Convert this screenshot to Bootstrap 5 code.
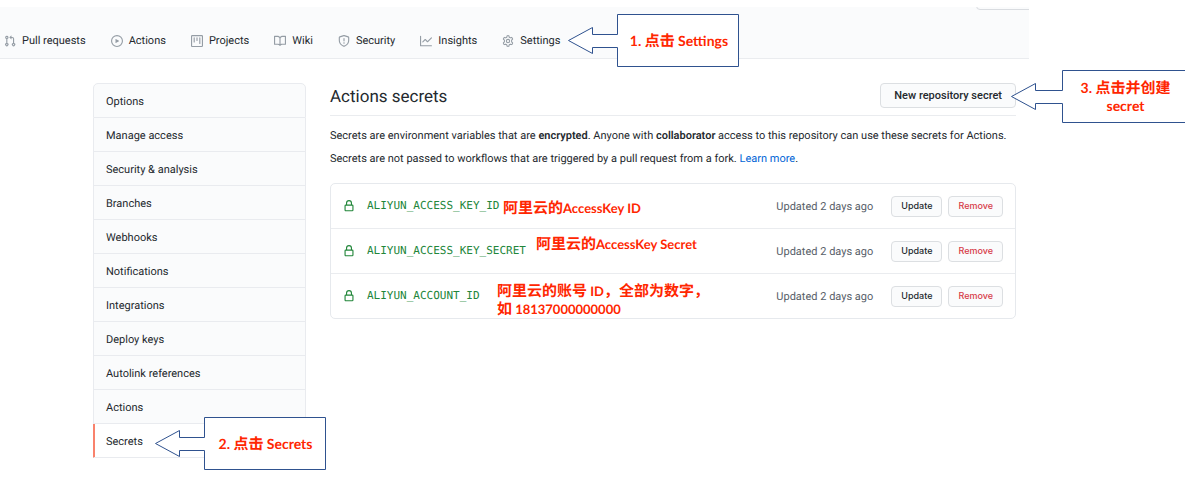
<!DOCTYPE html>
<html lang="zh-CN">
<head>
<meta charset="utf-8">
<meta name="viewport" content="width=device-width, initial-scale=1">
<title>Actions secrets</title>
<link href="https://cdn.jsdelivr.net/npm/bootstrap@5.3.0/dist/css/bootstrap.min.css" rel="stylesheet">
<style>
  body { font-family: Roboto, "Noto Sans CJK SC", sans-serif; font-size: 11px; line-height: 16px; color: #24292e; background: #fff; text-rendering: geometricPrecision; }
  svg { flex: none; }
  .page { overflow: hidden; padding-bottom: 20px; }
  .repo-head { max-width: 1029px; height: 52px; margin-top: 7px; background: #fafbfc; border-bottom: 1px solid #eaecef; overflow: hidden; }
  .repo-nav { padding: 26px 4px 0; gap: 25px; }
  .repo-nav .nav-link { padding: 0; gap: 6px; color: #24292e; white-space: nowrap; }
  .repo-nav svg { fill: #959da5; }
  .cut-button { top: -20px; right: -20px; width: 73px; height: 23px; border: 1px solid #d9dce0; border-radius: 4px; background: #fafbfc; }
  .settings { max-width: 923px; margin: 24px 0 0 93px; gap: 24px; }
  .side-menu { width: 213px; flex: none; --bs-list-group-border-color: #e9ebef; --bs-list-group-bg: #fafbfc; --bs-list-group-color: #24292e; --bs-list-group-border-radius: 5px; }
  .side-menu .list-group-item { height: 34px; padding: 10px 12px 0; }
  .side-menu .list-group-item:first-child { height: 35px; }
  .side-menu .current { background: #fff; box-shadow: inset 1px 0 #f9826c; border-left-color: #f9826c; border-radius: 0; }
  .title-bar { height: 33px; border-bottom: 1px solid #eaecef; }
  .title-bar h1 { font-size: 17px; line-height: 28px; font-weight: 400; margin: 0; }
  .btn-soft { --bs-btn-font-family: Inter, sans-serif; --bs-btn-font-size: 9px; --bs-btn-line-height: 12px; --bs-btn-font-weight: 500; --bs-btn-padding-x: 9px; --bs-btn-padding-y: 3px; --bs-btn-bg: #fafbfc; --bs-btn-border-color: #dcdfe2; --bs-btn-border-radius: 4px; --bs-btn-color: #24292e; height: 21px; white-space: nowrap; }
  .btn-new { --bs-btn-font-family: Roboto, sans-serif; --bs-btn-font-size: 11px; --bs-btn-padding-x: 13px; height: 25px; line-height: 17px; }
  .btn-remove { --bs-btn-color: #d73a49; margin-left: 6px; }
  .intro { margin: 0 0 7px; }
  .intro a { color: #0366d6; text-decoration: none; }
  .intro b { font-weight: 600; }
  .secret-list { border: 1px solid #e6e9ed; border-radius: 5px; margin: 16px 0 0; padding: 0; list-style: none; }
  .secret-list li { height: 44px; padding: 0 12px; }
  .secret-list li + li { border-top: 1px solid #eaecef; height: 45px; }
  .secret-list code { font-family: "DejaVu Sans Mono", monospace; font-size: 11px; color: #22863a; margin-left: 12px; }
  .secret-list .when { color: #586069; margin-right: 18px; padding-top: 2px; }
  .note { font-family: Lato, "Noto Sans CJK SC", sans-serif; font-size: 14px; line-height: 18px; font-weight: 700; color: #ff2600; white-space: nowrap; }
  .note i { font-style: normal; font-size: 15px; line-height: 1; }
  .secret-list .note { font-size: 13px; }
  .note-id { left: 172px; top: 15px; }
  .note-key { left: 205px; top: 6px; }
  .note-account { left: 166px; top: 8px; }
  .callout { width: 172px; height: 54px; padding-left: 49px; z-index: 2; }
  .callout svg { left: 0; top: 0; }
  .at-settings { left: 100%; top: -19px; margin-left: 8px; }
  .at-secrets { left: 61px; top: -7px; }
  .at-new { left: 100%; top: -13px; margin-left: -5px; width: 180px; }
</style>
</head>
<body>
<svg class="d-none" aria-hidden="true">
  <symbol id="lock" viewBox="0 0 16 16"><path fill-rule="evenodd" d="M4 4v2h-.25A1.75 1.75 0 002 7.75v5.5c0 .966.784 1.75 1.75 1.75h8.5A1.75 1.75 0 0014 13.250v-5.500A1.75 1.75 0 0012.250 6H12V4a4 4 0 10-8 0zm6.500 2V4a2.500 2.500 0 10-5 0v2h5zM3.500 7.750a.25.25 0 01.25-.25h8.500a.25.25 0 01.25.25v5.500a.25.25 0 01-.25.25h-8.500a.25.25 0 01-.25-.25v-5.500z"/></symbol>
  <symbol id="arrow-box" viewBox="0 0 172 54"><path d="M.5 26.500L24.500 13.500V20.500H49.500V.5H170.500V52.500H49.500V33.500H24.500V39.500Z" fill="#fff" stroke="#2f528f"/></symbol>
</svg>

<div class="page">
<header class="position-relative">
  <div class="repo-head position-relative">
    <span class="cut-button position-absolute"></span>
  </div>
  <nav class="position-absolute top-0 start-0" aria-label="Repository">
    <div class="repo-nav nav flex-nowrap">
      <a class="nav-link d-flex align-items-center" href="#"><svg width="12" height="12" viewBox="0 0 16 16"><path fill-rule="evenodd" d="M7.177 3.073L9.573.677A.25.25 0 0110 .854v4.792a.25.25 0 01-.427.177L7.177 3.427a.25.25 0 010-.354zM3.750 2.500a.75.75 0 100 1.500.75.75 0 000-1.500zm-2.250.75a2.250 2.250 0 113 2.122v5.256a2.251 2.251 0 11-1.500 0V5.372A2.250 2.250 0 011.500 3.250zM11 2.500h-1V4h1a1 1 0 011 1v5.628a2.251 2.251 0 101.500 0V5A2.500 2.500 0 0011 2.500zm1 10.250a.75.75 0 111.500 0 .75.75 0 01-1.500 0zM3.750 12a.75.75 0 100 1.500.75.75 0 000-1.500z"/></svg>Pull requests</a>
      <a class="nav-link d-flex align-items-center" href="#"><svg width="12" height="12" viewBox="0 0 16 16"><path fill-rule="evenodd" d="M1.500 8a6.500 6.500 0 1113 0 6.500 6.500 0 01-13 0zM8 0a8 8 0 100 16A8 8 0 008 0zM6.379 5.227A.25.25 0 006 5.442v5.117a.25.25 0 00.379.214l4.264-2.559a.25.25 0 000-.428L6.379 5.227z"/></svg>Actions</a>
      <a class="nav-link d-flex align-items-center" href="#"><svg width="12" height="12" viewBox="0 0 16 16"><path fill-rule="evenodd" d="M1.750 0A1.750 1.750 0 000 1.750v12.500C0 15.216.784 16 1.750 16h12.500A1.750 1.750 0 0016 14.250V1.750A1.750 1.750 0 0014.250 0H1.750zM1.500 1.750a.25.25 0 01.25-.25h12.500a.25.25 0 01.25.25v12.500a.25.25 0 01-.25.25H1.750a.25.25 0 01-.25-.25V1.750zM11.750 3a.75.75 0 00-.75.75v7.500a.75.75 0 001.500 0v-7.500a.75.75 0 00-.75-.75zm-8.250.75a.75.75 0 011.500 0v5.500a.75.75 0 01-1.500 0v-5.500zM8 3a.75.75 0 00-.75.75v3.500a.75.75 0 001.500 0v-3.500A.75.75 0 008 3z"/></svg>Projects</a>
      <a class="nav-link d-flex align-items-center" href="#"><svg width="12" height="12" viewBox="0 0 16 16"><path fill-rule="evenodd" d="M0 1.750A.75.75 0 01.75 1h4.253c1.227 0 2.317.59 3 1.501A3.744 3.744 0 0111.006 1h4.245a.75.75 0 01.75.75v10.500a.75.75 0 01-.75.75h-4.507a2.250 2.250 0 00-1.591.659l-.622.621a.75.75 0 01-1.060 0l-.622-.621A2.250 2.250 0 005.258 13H.75a.75.75 0 01-.75-.75V1.750zm8.755 3a2.250 2.250 0 012.250-2.250H14.500v9h-3.757c-.71 0-1.400.201-1.992.572l.004-7.322zm-1.504 7.324l.004-5.073-.002-2.253A2.250 2.250 0 005.003 2.500H1.500v9h3.757a3.750 3.750 0 011.994.574z"/></svg>Wiki</a>
      <a class="nav-link d-flex align-items-center" href="#"><svg width="12" height="12" viewBox="0 0 16 16"><path fill-rule="evenodd" d="M7.467.133a1.750 1.750 0 011.066 0l5.250 1.680A1.750 1.750 0 0115 3.480V7c0 1.566-.32 3.182-1.303 4.682-.983 1.498-2.585 2.813-5.032 3.855a1.700 1.700 0 01-1.330 0c-2.447-1.042-4.049-2.357-5.032-3.855C1.320 10.182 1 8.566 1 7V3.480a1.750 1.750 0 011.217-1.667l5.250-1.680zm.61 1.429a.25.25 0 00-.153 0l-5.250 1.680a.25.25 0 00-.174.238V7c0 1.358.275 2.666 1.057 3.860.784 1.194 2.121 2.340 4.366 3.297a.2.2 0 00.154 0c2.245-.956 3.582-2.104 4.366-3.298C13.225 9.666 13.500 8.360 13.500 7V3.480a.25.25 0 00-.174-.237l-5.250-1.680zM9 10.500a1 1 0 11-2 0 1 1 0 012 0zM8.750 4.750a.75.75 0 00-1.500 0v3a.75.75 0 001.500 0v-3z"/></svg>Security</a>
      <a class="nav-link d-flex align-items-center" href="#"><svg width="12" height="12" viewBox="0 0 16 16"><path fill-rule="evenodd" d="M1.500 1.750a.75.75 0 00-1.500 0v12.500c0 .414.336.75.75.75h14.500a.75.75 0 000-1.500H1.500V1.750zm14.280 2.530a.75.75 0 00-1.060-1.060L10 7.940 7.530 5.470a.75.75 0 00-1.060 0L3.220 8.720a.75.75 0 001.060 1.060L7 7.060l2.470 2.470a.75.75 0 001.060 0l5.250-5.250z"/></svg>Insights</a>
      <a class="nav-link d-flex align-items-center position-relative" href="#"><svg width="12" height="12" viewBox="0 0 16 16"><path d="M6.700 1.200Q8 .5 9.300 1.200L9.700 3.100 11 3.800 12.900 3.200Q14.100 4 14.200 5.400L12.800 6.800V9.200L14.200 10.600Q14.100 12 12.900 12.800L11 12.200 9.700 12.900 9.300 14.800Q8 15.500 6.700 14.800L6.300 12.900 5 12.200 3.100 12.800Q1.900 12 1.800 10.600L3.200 9.200V6.800L1.800 5.400Q1.900 4 3.100 3.200L5 3.800 6.300 3.100Z" fill="none" stroke="#959da5" stroke-width="1.400" stroke-linejoin="round"/><circle cx="8" cy="8" r="2.200" fill="none" stroke="#959da5" stroke-width="1.400"/></svg>Settings
        <span class="callout note position-absolute at-settings d-flex align-items-center justify-content-center"><svg class="position-absolute" width="172" height="54"><use href="#arrow-box"/></svg><span class="position-relative">1. <i>点击</i> Settings</span></span></a>
    </div>
  </nav>
</header>

<div class="settings d-flex">
  <nav class="side-menu list-group" aria-label="Settings">
    <a class="list-group-item" href="#">Options</a>
    <a class="list-group-item" href="#">Manage access</a>
    <a class="list-group-item" href="#">Security &amp; analysis</a>
    <a class="list-group-item" href="#">Branches</a>
    <a class="list-group-item" href="#">Webhooks</a>
    <a class="list-group-item" href="#">Notifications</a>
    <a class="list-group-item" href="#">Integrations</a>
    <a class="list-group-item" href="#">Deploy keys</a>
    <a class="list-group-item" href="#">Autolink references</a>
    <a class="list-group-item" href="#">Actions</a>
    <a class="list-group-item current" href="#" aria-current="page">Secrets
      <span class="callout note position-absolute at-secrets d-flex align-items-center justify-content-center"><svg class="position-absolute" width="172" height="54"><use href="#arrow-box"/></svg><span class="position-relative">2. <i>点击</i> Secrets</span></span></a>
  </nav>

  <main class="flex-grow-1">
    <div class="title-bar d-flex justify-content-between align-items-start mb-2">
      <h1>Actions secrets</h1>
      <div class="position-relative">
        <button type="button" class="btn btn-soft btn-new">New repository secret</button>
        <div class="callout note position-absolute at-new d-flex align-items-center justify-content-center text-center"><svg class="position-absolute" width="180" height="54" viewBox="0 0 180 54"><path d="M.5 26.500L24.500 13.500V20.500H51.500V.5H178.500V52.500H51.500V33.500H24.500V39.500Z" fill="#fff" stroke="#2f528f"/></svg><span class="position-relative">3. <i>点击并创建</i><br>secret</span></div>
      </div>
    </div>
    <div class="pt-1 mt-1">
      <p class="intro mt-px">Secrets are environment variables that are <b>encrypted</b>. Anyone with <b>collaborator</b> access to this repository can use these secrets for Actions.</p>
      <p class="intro">Secrets are not passed to workflows that are triggered by a pull request from a fork. <a href="#">Learn more</a>.</p>
    </div>

    <ul class="secret-list mt-3">
      <li class="d-flex align-items-center position-relative">
        <svg width="12" height="12" fill="#22863a"><use href="#lock"/></svg><code>ALIYUN_ACCESS_KEY_ID</code>
        <span class="note note-id position-absolute"><i>阿里云的</i>AccessKey ID</span>
        <span class="when ms-auto">Updated 2 days ago</span>
        <button type="button" class="btn btn-soft">Update</button><button type="button" class="btn btn-soft btn-remove">Remove</button>
      </li>
      <li class="d-flex align-items-center position-relative">
        <svg width="12" height="12" fill="#22863a"><use href="#lock"/></svg><code>ALIYUN_ACCESS_KEY_SECRET</code>
        <span class="note note-key position-absolute"><i>阿里云的</i>AccessKey Secret</span>
        <span class="when ms-auto">Updated 2 days ago</span>
        <button type="button" class="btn btn-soft">Update</button><button type="button" class="btn btn-soft btn-remove">Remove</button>
      </li>
      <li class="d-flex align-items-center position-relative">
        <svg width="12" height="12" fill="#22863a"><use href="#lock"/></svg><code>ALIYUN_ACCOUNT_ID</code>
        <span class="note note-account position-absolute"><i>阿里云的账号</i> ID<i>，全部为数字，</i><br><i>如</i> 18137000000000</span>
        <span class="when ms-auto">Updated 2 days ago</span>
        <button type="button" class="btn btn-soft">Update</button><button type="button" class="btn btn-soft btn-remove">Remove</button>
      </li>
    </ul>
  </main>
</div>
</div>
<script src="https://cdn.jsdelivr.net/npm/bootstrap@5.3.0/dist/js/bootstrap.bundle.min.js"></script>
</body>
</html>
